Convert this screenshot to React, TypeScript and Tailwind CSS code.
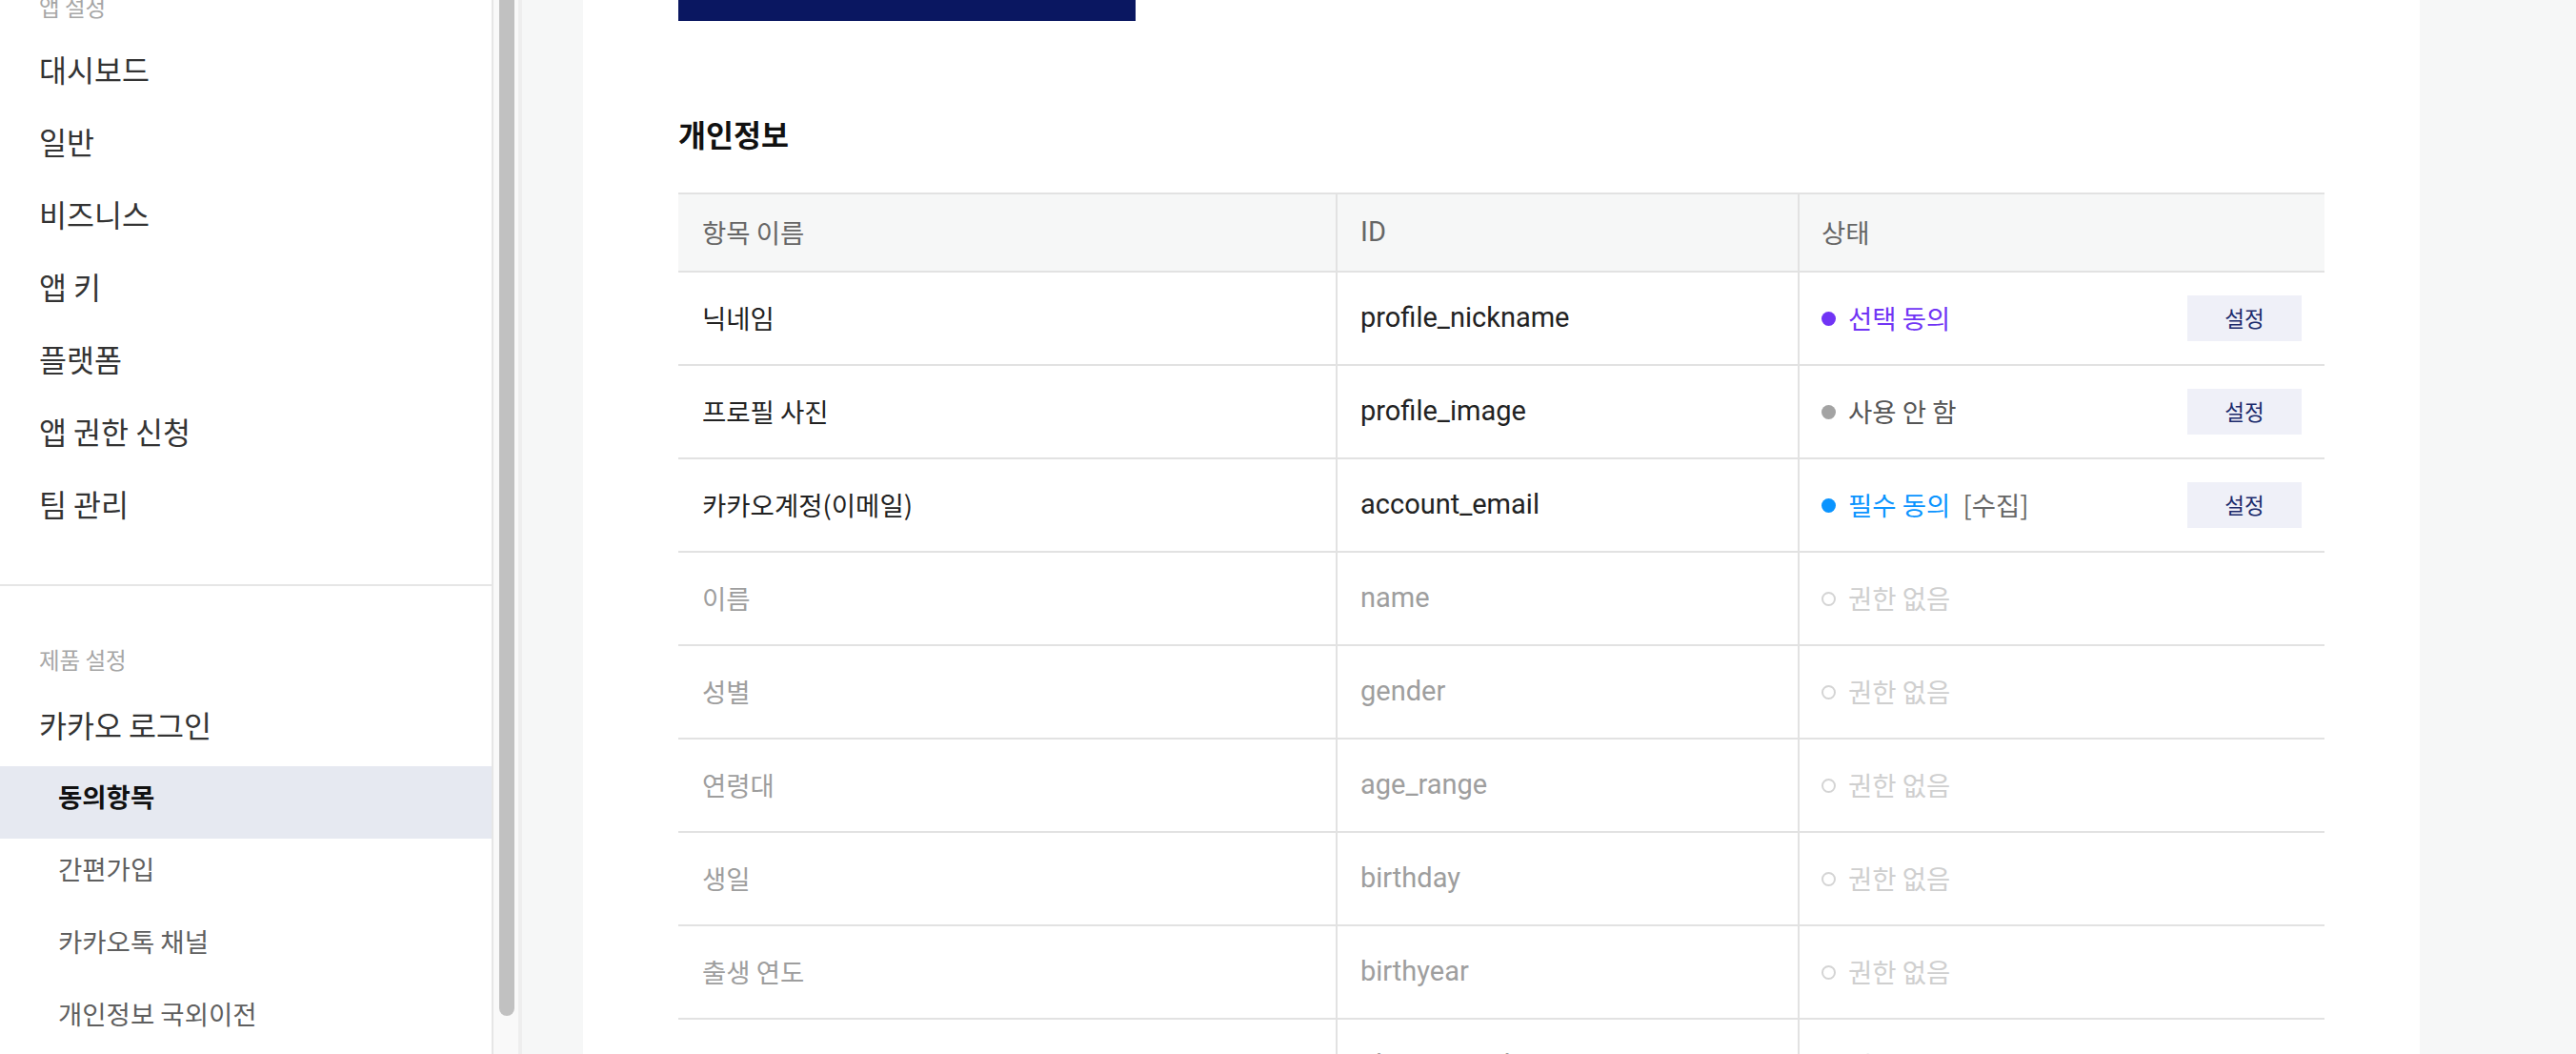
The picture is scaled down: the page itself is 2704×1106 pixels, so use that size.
type Status = 'optional' | 'off' | 'required' | 'none';

interface ConsentRow {
  name: string;
  id: string;
  status: Status;
}

const mainMenu = ['대시보드', '일반', '비즈니스', '앱 키', '플랫폼', '앱 권한 신청', '팀 관리'];

const subMenu = [
  { label: '동의항목', active: true },
  { label: '간편가입', active: false },
  { label: '카카오톡 채널', active: false },
  { label: '개인정보 국외이전', active: false },
];

const rows: ConsentRow[] = [
  { name: '닉네임', id: 'profile_nickname', status: 'optional' },
  { name: '프로필 사진', id: 'profile_image', status: 'off' },
  { name: '카카오계정(이메일)', id: 'account_email', status: 'required' },
  { name: '이름', id: 'name', status: 'none' },
  { name: '성별', id: 'gender', status: 'none' },
  { name: '연령대', id: 'age_range', status: 'none' },
  { name: '생일', id: 'birthday', status: 'none' },
  { name: '출생 연도', id: 'birthyear', status: 'none' },
  { name: '카카오계정(전화번호)', id: 'phone_number', status: 'none' },
];

const Sidebar = () => (
  <aside className="w-[518px] shrink-0 border-r-2 border-[#e6e6e6] bg-white">
    <div className="-mt-[13px] h-[40px] pl-[41px] text-[23.5px] leading-[40px] text-[#a6a6a6]">앱 설정</div>
    <ul className="mt-[8px]">
      {mainMenu.map((item) => (
        <li key={item} className="flex h-[76px] items-center pl-[41px] text-[31.5px] text-[#333]">
          {item}
        </li>
      ))}
    </ul>
    <div className="mt-[46px] h-[2px] bg-[#e6e6e6]" />
    <div className="mt-[57px] h-[40px] pl-[41px] text-[23.5px] leading-[40px] text-[#a6a6a6]">제품 설정</div>
    <div className="mt-[11px] flex h-[76px] items-center pl-[41px] text-[31.5px] text-[#333]">카카오 로그인</div>
    <ul className="mt-[5px]">
      {subMenu.map((item) => (
        <li
          key={item.label}
          className={
            item.active
              ? 'flex h-[76px] items-center bg-[#e6e9f1] pb-[12px] pl-[61px] text-[27.5px] font-bold text-[#111]'
              : 'flex h-[76px] items-center pb-[12px] pl-[61px] text-[27.5px] text-[#5f5f5f]'
          }
        >
          {item.label}
        </li>
      ))}
    </ul>
  </aside>
);

const StatusCell = ({ status }: { status: Status }) => {
  if (status === 'none') {
    return (
      <div className="flex items-center gap-[13px] text-[27.5px] text-[#cfcfcf]">
        <span className="h-[15px] w-[15px] rounded-full border-2 border-[#d4d4d4]" />
        권한 없음
      </div>
    );
  }

  return (
    <>
      <div className="flex items-center gap-[13px] text-[27.5px]">
        {status === 'optional' && (
          <>
            <span className="h-[15px] w-[15px] rounded-full bg-[#7134f5]" />
            <span className="text-[#7134f5]">선택 동의</span>
          </>
        )}
        {status === 'off' && (
          <>
            <span className="h-[15px] w-[15px] rounded-full bg-[#a3a3a3]" />
            <span className="text-[#555]">사용 안 함</span>
          </>
        )}
        {status === 'required' && (
          <>
            <span className="h-[15px] w-[15px] rounded-full bg-[#0a94ff]" />
            <span className="text-[#0a94ff]">필수 동의</span>
            <span className="text-[#666]">[수집]</span>
          </>
        )}
      </div>
      <button className="h-[48px] w-[120px] bg-[#eff0f8] text-[22.5px] text-[#1b2a6b]">설정</button>
    </>
  );
};

const ConsentTable = () => (
  <div className="w-full">
    <div className="grid h-[84px] grid-cols-[690px_485px_1fr] border-y-2 border-[#e2e2e2] bg-[#f6f7f7] text-[27.5px] text-[#666]">
      <div className="flex items-center pl-[25px]">항목 이름</div>
      <div className="flex items-center border-l-2 border-[#e2e2e2] pl-[24px] font-['Roboto','Noto_Sans_CJK_KR',sans-serif] text-[29px]">
        ID
      </div>
      <div className="flex items-center border-l-2 border-[#e2e2e2] pl-[23px]">상태</div>
    </div>
    {rows.map((row) => {
      const muted = row.status === 'none';
      return (
        <div key={row.id} className="grid h-[98px] grid-cols-[690px_485px_1fr] border-b-2 border-[#e2e2e2]">
          <div className={`flex items-center pl-[25px] text-[27.5px] ${muted ? 'text-[#9e9e9e]' : 'text-[#222]'}`}>
            {row.name}
          </div>
          <div
            className={`flex items-center border-l-2 border-[#e2e2e2] pl-[24px] font-['Roboto','Noto_Sans_CJK_KR',sans-serif] text-[29px] ${
              muted ? 'text-[#9e9e9e]' : 'text-[#222]'
            }`}
          >
            {row.id}
          </div>
          <div className="flex items-center justify-between border-l-2 border-[#e2e2e2] pl-[23px] pr-[24px]">
            <StatusCell status={row.status} />
          </div>
        </div>
      );
    })}
  </div>
);

export default function App() {
  return (
    <div className="flex h-[1106px] w-[2704px] overflow-hidden bg-[#f6f7f7] font-['Noto_Sans_CJK_KR','Noto_Sans',sans-serif]">
      <Sidebar />
      {/* sidebar scrollbar */}
      <div className="w-[30px] shrink-0 border-r-4 border-[#eeeeee] bg-[#f9f9f9]">
        <div className="ml-[6px] h-[1066px] w-[16px] rounded-b-full bg-[#c1c1c1]" />
      </div>
      <main className="flex-1 pl-[64px] pr-[164px]">
        <div className="h-full bg-white px-[100px]">
          <div className="h-[22px] w-[480px] bg-[#0a1761]" />
          <h2 className="mt-[98px] h-[40px] text-[31.5px] font-bold leading-[40px] text-[#111]">개인정보</h2>
          <div className="mt-[42px]">
            <ConsentTable />
          </div>
        </div>
      </main>
    </div>
  );
}
